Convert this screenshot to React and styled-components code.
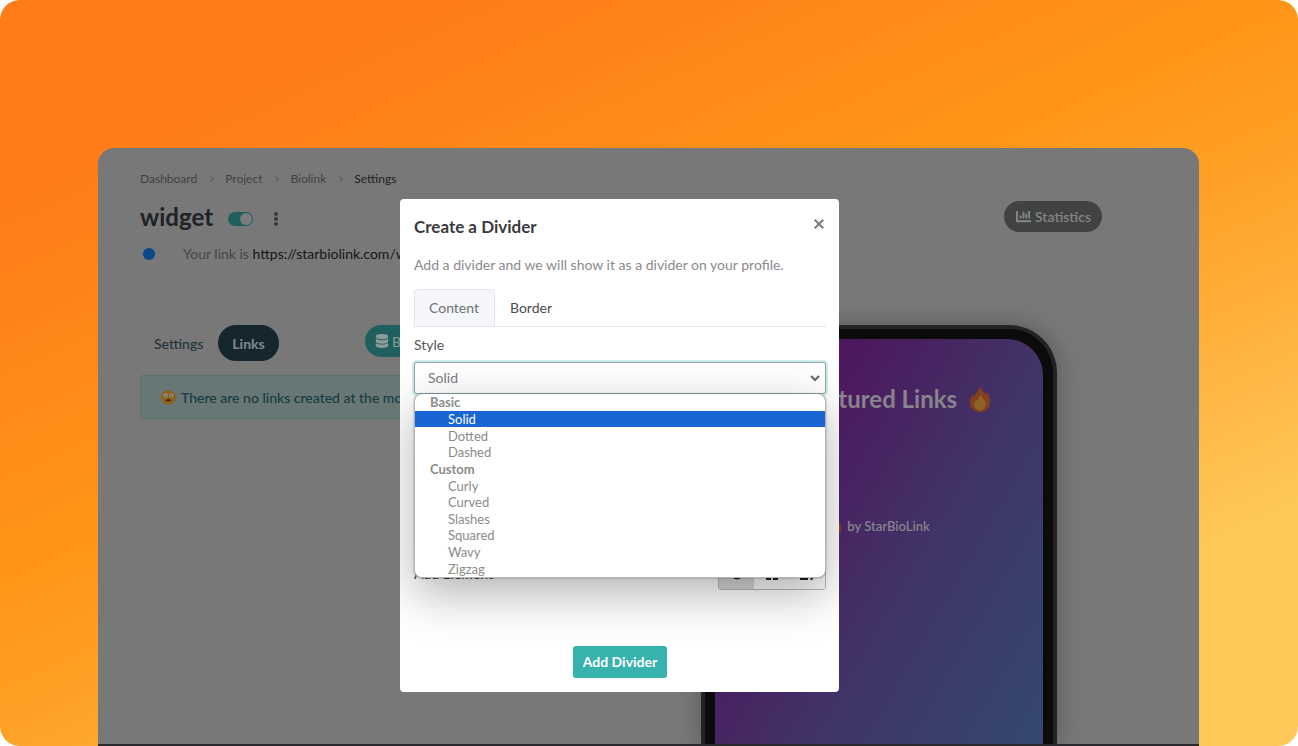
import React from 'react'
import styled, { createGlobalStyle } from 'styled-components'
import { FaChartBar, FaDatabase } from 'react-icons/fa'

const optionGroups = [
    { label: 'Basic', options: ['Solid', 'Dotted', 'Dashed'] },
    { label: 'Custom', options: ['Curly', 'Curved', 'Slashes', 'Squared', 'Wavy', 'Zigzag'] },
]

const Flame = ({ width, height }) => (
    <svg width={width} height={height} viewBox="0 0 20 26" aria-hidden="true">
        <path fill="#83401a" d="M10.500 0C11 4 14 6 15.500 8.500c.8-.6 1.200-1.400 1.300-2.300C19 9.500 20 13 20 16.500 20 22 16 26 10 26S0 22 0 16.500c0-3.600 1.300-6.300 3-8.500.2 1.200.7 2 1.600 2.600C5.500 6 9.500 4.500 10.500 0Z" />
        <path fill="#8c6325" d="M10.500 8c.4 2.600 2.300 4 3.700 5.700.9 1.300 1.400 2.700 1.400 4.400 0 4-2.500 6.500-5.600 6.500s-5.700-2.500-5.700-6.300c0-2 .8-3.500 1.700-4.600.4.900.9 1.300 1.600 1.600C7.500 12.500 9.800 11 10.500 8Z" />
    </svg>
)

const WorriedFace = () => (
    <svg width="15" height="15" viewBox="0 0 15 15" aria-hidden="true">
        <circle cx="7.500" cy="7.500" r="7.300" fill="#8f6119" />
        <circle cx="4.700" cy="5.500" r="2" fill="#999b98" />
        <circle cx="10.300" cy="5.500" r="2" fill="#999b98" />
        <circle cx="4.900" cy="5.700" r=".7" fill="#3a2412" />
        <circle cx="10.100" cy="5.700" r=".7" fill="#3a2412" />
        <path d="M4.500 11.500c.4-1.800 1.500-2.600 3-2.600s2.600.8 3 2.600l-1.500-.7-1.500.7-1.500-.7Z" fill="#3f1d10" />
    </svg>
)

const App = () => {
    return (
        <Stage>
            <GlobalStyle />
            <Window>
                <Page>
                    <Breadcrumbs aria-label="Breadcrumb">
                        <Crumb href="#">Dashboard</Crumb>
                        <CrumbArrow />
                        <Crumb href="#">Project</Crumb>
                        <CrumbArrow />
                        <Crumb href="#">Biolink</Crumb>
                        <CrumbArrow />
                        <Crumb href="#" $active>Settings</Crumb>
                    </Breadcrumbs>
                    <TitleRow>
                        <PageTitle>widget</PageTitle>
                        <Toggle type="checkbox" defaultChecked aria-label="Enabled" />
                        <MoreButton aria-label="More">
                            <svg width="6" height="14" viewBox="0 0 6 14" fill="#393939">
                                <circle cx="3" cy="2" r="2" />
                                <circle cx="3" cy="7" r="2" />
                                <circle cx="3" cy="12" r="2" />
                            </svg>
                        </MoreButton>
                        <StatisticsButton>
                            <FaChartBar size={15} />
                            Statistics
                        </StatisticsButton>
                    </TitleRow>
                    <LinkRow>
                        <Dot />
                        <span>Your link is <a href="#">https://starbiolink.com/widget</a></span>
                    </LinkRow>
                    <Columns>
                        <div>
                            <Toolbar>
                                <PillTab>Settings</PillTab>
                                <PillTab $active>Links</PillTab>
                                <BlockButton>
                                    <FaDatabase size={14} />
                                    Block
                                </BlockButton>
                            </Toolbar>
                            <Notice>
                                <WorriedFace />
                                There are no links created at the moment
                            </Notice>
                        </div>
                        <Phone>
                            <Screen>
                                <ScreenTitle>
                                    <Flame width={20} height={26} />
                                    Featured Links
                                    <Flame width={20} height={26} />
                                </ScreenTitle>
                                <Branding>
                                    <Flame width={13} height={17} />
                                    by StarBioLink
                                </Branding>
                            </Screen>
                        </Phone>
                    </Columns>
                </Page>
                <Overlay>
                    <Modal role="dialog" aria-labelledby="modal-title">
                        <ModalHeader>
                            <ModalTitle id="modal-title">Create a Divider</ModalTitle>
                            <CloseButton aria-label="Close">
                                <svg width="10" height="10" viewBox="0 0 10 10" stroke="#7a7a7a" strokeWidth="2">
                                    <path d="M.7.7l8.600 8.600M9.300.7L.7 9.300" />
                                </svg>
                            </CloseButton>
                        </ModalHeader>
                        <Hint>Add a divider and we will show it as a divider on your profile.</Hint>
                        <Tabs>
                            <Tab $active>Content</Tab>
                            <Tab>Border</Tab>
                        </Tabs>
                        <Label htmlFor="divider-style">Style</Label>
                        <SelectBox>
                            <Select id="divider-style" defaultValue="Solid">
                                {optionGroups.map((group) => (
                                    <optgroup key={group.label} label={group.label}>
                                        {group.options.map((name) => <option key={name}>{name}</option>)}
                                    </optgroup>
                                ))}
                            </Select>
                            <Chevron width="10" height="7" viewBox="0 0 10 7" fill="none" stroke="#666" strokeWidth="2">
                                <path d="M1 1l4 4 4-4" />
                            </Chevron>
                            <Menu role="listbox">
                                {optionGroups.map((group) => (
                                    <React.Fragment key={group.label}>
                                        <MenuGroup>{group.label}</MenuGroup>
                                        {group.options.map((name) => (
                                            <MenuItem key={name} role="option" $active={name === 'Solid'}>{name}</MenuItem>
                                        ))}
                                    </React.Fragment>
                                ))}
                            </Menu>
                        </SelectBox>
                        <ElementRow>
                            <span>Add Element</span>
                            <ButtonGroup>
                                <GroupButton $active aria-label="None">
                                    <svg width="14" height="14" viewBox="0 0 14 14" fill="none" stroke="#222" strokeWidth="2">
                                        <circle cx="7" cy="7" r="5.500" />
                                    </svg>
                                </GroupButton>
                                <GroupButton aria-label="Text">
                                    <svg width="14" height="14" viewBox="0 0 14 14" fill="none" stroke="#222" strokeWidth="2">
                                        <path d="M4 1v12M10 1v12M1 13h5M8 13h5M4 7h6" />
                                    </svg>
                                </GroupButton>
                                <GroupButton aria-label="Icon">
                                    <svg width="16" height="14" viewBox="0 0 16 14" fill="none" stroke="#222" strokeWidth="2">
                                        <path d="M2 6v7h6V6M4 13l4-4M13 4l-2 5h4l-3 5" />
                                    </svg>
                                </GroupButton>
                            </ButtonGroup>
                        </ElementRow>
                        <SubmitButton>Add Divider</SubmitButton>
                    </Modal>
                </Overlay>
            </Window>
        </Stage>
    )
}

export default App;

const GlobalStyle = createGlobalStyle`
    * {
        box-sizing: border-box;
    }

    body {
        background: #fff;
        font-family: Lato, "Liberation Sans", sans-serif;
        font-size: 14px;
        margin: 0;
    }

    button, select, input {
        font-family: inherit;
        font-size: inherit;
        margin: 0;
    }

    a {
        text-decoration: none;
    }
`
const Stage = styled.div`
    background: linear-gradient(156deg, #ff7c19 15%, #ff9518 43%, #ffa228 56%, #ffc658 81%);
    border-radius: 20px;
    display: flex;
    height: 100vh;
    min-height: 720px;
    overflow: hidden;
    padding: 148px 99px 0 98px;
`
const Window = styled.div`
    background: #787879;
    border-bottom: 2px solid #2b2a2e;
    border-radius: 16px 16px 0 0;
    display: flex;
    flex: 1;
    min-width: 0;
    overflow: hidden;
    position: relative;
`
const Page = styled.div`
    display: flex;
    flex: 1;
    flex-direction: column;
    min-width: 0;
    padding: 22px 97px 0 42px;
`
const Breadcrumbs = styled.nav`
    align-items: center;
    display: flex;
    font-size: 12px;
    gap: 12px;
    line-height: 18px;
`
const Crumb = styled.a`
    color: ${(props) => (props.$active ? '#202022' : '#414143')};
`
const CrumbArrow = styled.span`
    border: solid #5c5c5e;
    border-width: 1px 1px 0 0;
    height: 4px;
    transform: rotate(45deg);
    width: 4px;
`
const TitleRow = styled.div`
    align-items: center;
    display: flex;
    margin-top: 13px;
`
const PageTitle = styled.h1`
    color: #222224;
    font-size: 24px;
    font-weight: 700;
    line-height: 31px;
    margin: 0;
`
const Toggle = styled.input`
    appearance: none;
    background: #1f605e;
    border-radius: 7px;
    height: 14px;
    margin-left: 15px;
    margin-top: 4px;
    padding: 1px;
    width: 25px;

    &::before {
        background: #7c7c7c;
        border-radius: 50%;
        content: "";
        display: block;
        height: 12px;
        margin-left: 11px;
        width: 12px;
    }
`
const MoreButton = styled.button`
    background: none;
    border: 0;
    display: flex;
    margin-left: 20px;
    margin-top: 4px;
    padding: 0;
`
const StatisticsButton = styled.button`
    align-items: center;
    background: #414342;
    border: 0;
    border-radius: 16px;
    color: #858686;
    display: flex;
    font-weight: 600;
    gap: 4px;
    height: 31px;
    margin-left: auto;
    padding: 0 11px 0 12px;
`
const LinkRow = styled.div`
    align-items: center;
    color: #454547;
    display: flex;
    gap: 28px;
    line-height: 20px;
    margin-top: 12px;

    a {
        color: #161618;
    }
`
const Dot = styled.span`
    background: #08498a;
    border-radius: 50%;
    height: 12px;
    margin-left: 3px;
    width: 12px;
`
const Columns = styled.div`
    display: grid;
    flex: 1;
    grid-template-columns: minmax(0, 1fr) 446px;
    margin-top: 61px;
`
const Toolbar = styled.div`
    align-items: flex-start;
    display: flex;
    gap: 1px;
`
const PillTab = styled.button`
    background: ${(props) => (props.$active ? '#15262f' : 'transparent')};
    border: 0;
    border-radius: 18px;
    color: ${(props) => (props.$active ? '#858a8c' : '#243238')};
    font-weight: ${(props) => (props.$active ? 700 : 500)};
    height: 36px;
    padding: 0 14px;
`
const BlockButton = styled.button`
    align-items: center;
    background: #1f605e;
    border: 0;
    border-radius: 16px;
    color: #8b9b9a;
    display: flex;
    gap: 3px;
    height: 32px;
    margin-left: auto;
    padding: 0 230px 0 10px;
`
const Notice = styled.div`
    align-items: center;
    background: #667776;
    border: 1px solid #5a7271;
    border-radius: 3px;
    color: #1a3a40;
    display: flex;
    font-weight: 500;
    gap: 5px;
    height: 44px;
    margin-top: 14px;
    padding: 0 20px;
    white-space: nowrap;
`
const Phone = styled.div`
    background: #0b0b0b;
    border: 4px solid #232323;
    border-bottom: 0;
    border-radius: 48px 48px 0 0;
    box-shadow: 0 0 24px rgba(0, 0, 0, 0.28);
    display: flex;
    justify-self: center;
    padding: 10px 10px 0 10px;
    width: 356px;
`
const Screen = styled.div`
    align-items: center;
    background: linear-gradient(120deg, #4d185d 25%, #403467 60%, #334870 100%);
    border-radius: 36px 36px 0 0;
    color: #88838c;
    display: flex;
    flex: 1;
    flex-direction: column;
    padding-top: 44px;
`
const ScreenTitle = styled.div`
    align-items: center;
    display: flex;
    font-size: 24px;
    font-weight: 700;
    gap: 13px;
    line-height: 32px;
`
const Branding = styled.div`
    align-items: center;
    display: flex;
    font-size: 13px;
    font-weight: 600;
    gap: 6px;
    line-height: 20px;
    margin-top: 101px;
`
const Overlay = styled.div`
    align-items: flex-start;
    display: flex;
    inset: 0;
    justify-content: center;
    padding: 51px 58px 0 0;
    position: absolute;
`
const Modal = styled.div`
    background: #fff;
    border-radius: 4px;
    display: flex;
    flex-direction: column;
    overflow: hidden;
    padding: 15px 13px 14px 14px;
    width: 439px;
`
const ModalHeader = styled.div`
    align-items: center;
    display: flex;
    justify-content: space-between;
`
const ModalTitle = styled.h2`
    color: #3a3a3c;
    font-size: 17px;
    font-weight: 700;
    line-height: 26px;
    margin: 0;
`
const CloseButton = styled.button`
    background: none;
    border: 0;
    display: flex;
    padding: 0 2px 6px;
`
const Hint = styled.p`
    color: #8a8a8c;
    line-height: 20px;
    margin: 15px 0 14px;
`
const Tabs = styled.div`
    border-bottom: 1px solid #e4e6e8;
    display: flex;
    height: 38px;
`
const Tab = styled.button`
    background: ${(props) => (props.$active ? '#f4f6f9' : 'transparent')};
    border: 1px solid ${(props) => (props.$active ? '#e4e6e8' : 'transparent')};
    border-bottom: 0;
    border-radius: 4px 4px 0 0;
    color: ${(props) => (props.$active ? '#6f7173' : '#4b4c4e')};
    padding: 0 15px 2px 14px;
`
const Label = styled.label`
    color: #55565a;
    line-height: 20px;
    margin: 8px 0 7px;
`
const SelectBox = styled.div`
    position: relative;
`
const Select = styled.select`
    appearance: none;
    background: #fff;
    border: 1px solid #8fa5a6;
    border-radius: 3px;
    box-shadow: 0 0 0 2px #cdebed;
    color: #7b7c7e;
    display: block;
    height: 32px;
    padding: 0 14px 2px 13px;
    width: 100%;
`
const Chevron = styled.svg`
    pointer-events: none;
    position: absolute;
    right: 6px;
    top: 13px;
`
const Menu = styled.div`
    background: #fff;
    border: 1px solid #b5b5b5;
    border-top: 0;
    border-radius: 8px;
    box-shadow: 0 16px 48px rgba(0, 0, 0, 0.3), 0 0 2px rgba(0, 0, 0, 0.4);
    color: #8a8b8a;
    display: flex;
    flex-direction: column;
    font-size: 13px;
    height: 184px;
    left: 0;
    overflow: hidden;
    position: absolute;
    right: 0;
    top: 32px;
    z-index: 2;
`
const MenuGroup = styled.div`
    align-items: center;
    display: flex;
    flex: 1;
    font-weight: 700;
    line-height: 16px;
    padding-left: 15px;
`
const MenuItem = styled.div`
    align-items: center;
    background: ${(props) => (props.$active ? '#1865d3' : 'transparent')};
    color: ${(props) => (props.$active ? '#fff' : 'inherit')};
    display: flex;
    flex: 1;
    line-height: 16px;
    padding-left: 33px;
`
const ElementRow = styled.div`
    align-items: center;
    color: #3a3a3c;
    display: flex;
    justify-content: space-between;
    margin-top: 162px;
`
const ButtonGroup = styled.div`
    border: 1px solid #b9b9b9;
    border-radius: 3px;
    display: flex;
    width: 108px;
`
const GroupButton = styled.button`
    align-items: center;
    background: ${(props) => (props.$active ? '#d6d6d6' : '#fafafa')};
    border: 0;
    display: flex;
    flex: 1;
    height: 32px;
    justify-content: center;
    padding: 0;
`
const SubmitButton = styled.button`
    align-self: center;
    background: #38b2ac;
    border: 0;
    border-radius: 3px;
    color: #fff;
    font-weight: 700;
    height: 32px;
    margin-top: 56px;
    padding: 0 10px 1px;
`
